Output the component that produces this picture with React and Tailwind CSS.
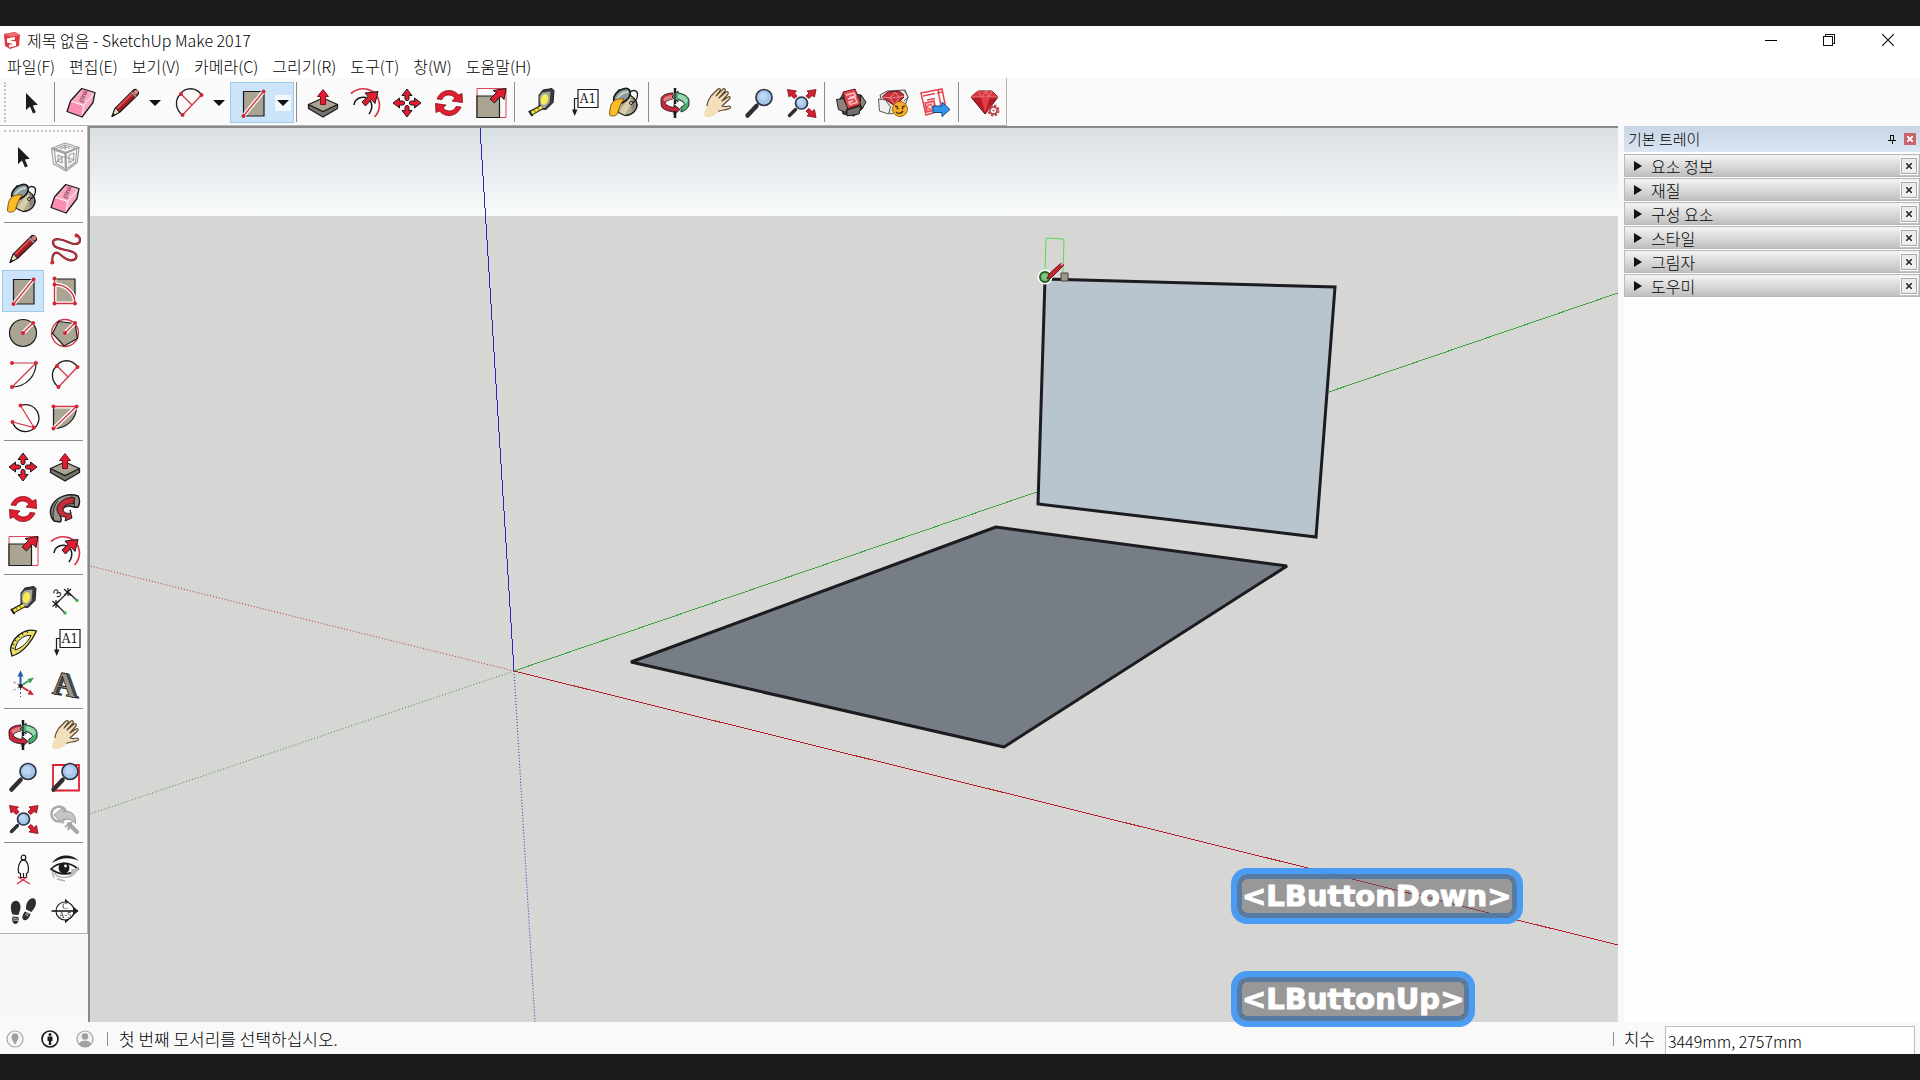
import clsx from 'clsx';

const RED = '#e21d2f';
const INK = '#1c1c1e';
const TAUPE = '#a9a592';

function Svg({ children }) {
  return (
    <svg viewBox="0 0 32 32" className="size-8 shrink-0 overflow-visible" fill="none" aria-hidden="true">
      {children}
    </svg>
  );
}

function Dots({ at }) {
  return at.map(([x, y]) => <circle key={`${x}-${y}`} cx={x} cy={y} r="2" fill="#d42436" />);
}

// red line on a white halo, used by all the shape tools
function Halo({ d }) {
  return (
    <>
      <path d={d} stroke="#fff" strokeWidth="4" />
      <path d={d} stroke="#d03545" strokeWidth="1.4" />
    </>
  );
}

const Cursor = () => (
  <Svg>
    <path d="M11 6v17l4-3.6 3 7 2.8-1.2-3-6.8 5-.6z" fill={INK} />
  </Svg>
);

const Component = () => (
  <Svg>
    <g stroke="#a2a2a2" strokeWidth="1.2" strokeLinejoin="round">
      <path d="M2.5 7.5 16 2l14 4.5-1.7 15L17 30 4.5 23z" />
      <path d="M5 8.5 16 4l11 3.5M5.5 10l1.3 12L15.5 27.5M18.5 27 26.5 21l1.3-12" />
      <path d="m2.5 7.5 14 4.5L30 6.5M16.5 12 17 30" strokeWidth="2.4" />
      <path d="m16 4 .2 5M7 21.5l7-6 12 3.5M9 14l4 2v6l-4-2zM20 14l5-2-.6 7-4.4 3zM11 8l5-2 5 1.5" />
    </g>
  </Svg>
);

const Bucket = () => (
  <Svg>
    <g transform="translate(-2 0)">
      <path d="M12 3 23 8c6 4 8 9 6.5 13-2 5-7 7.5-11 7.5C13 27 8 23 6 17z" fill="#b3aa91" stroke={INK} strokeWidth="1.5" />
      <path d="M22 11 12 25l6 3 7-13z" fill="#d9cda8" />
      <path d="M25 10c3 3 4.5 7 3 11l-3 4c-1-5-1-10 0-15z" fill="#8a8576" />
      <ellipse cx="15" cy="9" rx="9.5" ry="6" transform="rotate(-38 15 9)" fill="#8b9a9c" stroke={INK} strokeWidth="1.8" />
      <path d="M10 12c3-5 7-7 11-7" stroke="#c6d2d2" strokeWidth="2" />
      <path d="M23 5c4-3 8-1 7.5 3-.3 4-3 7-5.5 8" stroke={INK} strokeWidth="1.3" />
      <circle cx="24" cy="16" r="1.5" fill="#eee" stroke={INK} />
      <path d="M17 12c-6-1-11 1-13 6-1 3-1.5 8-1.5 10 2 2 6 1 8-1 1-6 3-10 6.5-15z" fill="#fbbc26" stroke="#7d5b12" />
    </g>
  </Svg>
);

const Eraser = () => (
  <Svg>
    <path d="M16.7 1.5 30 5.5l-2 10L17 30 2 24.5 5.5 14z" fill="#f9a9c0" />
    <path d="M5.5 14 18.5 18.5 17 30 2 24.5z" fill="#fb8fb2" />
    <path d="M5.5 14 18.5 18.5 30 5.5M18.5 18.5 17 30" stroke="#fff" />
    <path d="M16.7 1.5 30 5.5l-2 10L17 30 2 24.5 5.5 14z" stroke={INK} strokeWidth="1.3" strokeLinejoin="round" />
    <text x="19" y="12" transform="rotate(-62 18 10)" textAnchor="middle" fontSize="7" fontFamily="Liberation Sans" fill="#6d2437">pink</text>
  </Svg>
);

const Pencil = () => (
  <Svg>
    <path d="M3 29.5 6 21.5 24.5 3c2-2 6.5 2 4.5 4.5L11 25z" fill="#a51f22" stroke={INK} strokeWidth="1.2" strokeLinejoin="round" />
    <path d="M8 21.5 24 5.5" stroke="#e0474a" strokeWidth="2.2" />
    <path d="M3 29.5 6 21.5l2 .3.8 2 2.2 1.2z" fill="#e9dcb6" stroke={INK} strokeLinejoin="round" />
    <path d="m3 29.5 1.2-3.2 2 1.6z" fill={INK} />
    <path d="m22.5 5 4.5 4.5" stroke="#8f8f8f" strokeWidth="2" />
    <circle cx="27" cy="5" r="2" fill="#e0898b" />
  </Svg>
);

const FREEHAND_PATH =
  'M3.5 29C2.5 22 6 17 10.5 21c5 4 10 8.5 15 5.5 4-3 1.5-7-4.5-8.5C13 16 4 15.5 4 9.5 4.5 4 14 6.5 19 9c7 3.5 12 2 12-2 0-3-3-4.5-3-4.5';

const Freehand = () => (
  <Svg>
    <path d={FREEHAND_PATH} stroke="#5a1218" strokeWidth="2.2" />
    <path d={FREEHAND_PATH} stroke="#d03545" strokeWidth="1.2" />
    <Dots at={[[3.3, 29.5], [27.5, 2.5]]} />
  </Svg>
);

const Rectangle = () => (
  <Svg>
    <path d="M6.5 4.5h20.5v24.5H6.5z" fill={TAUPE} stroke={INK} strokeWidth="1.2" />
    <Halo d="M6.5 29 26.5 4.5" />
    <Dots at={[[6.5, 29], [26.5, 4.5]]} />
  </Svg>
);

const RotatedRect = () => (
  <Svg>
    <path d="M5.5 4H26v24.5H5.5z" fill={TAUPE} stroke={INK} strokeWidth="1.2" />
    <Halo d="M5.5 3.5v25H26c0-11-9-19-20.5-19" />
    <Dots at={[[5.5, 3.5], [5.5, 9.5], [5.5, 28.5], [26, 28.5]]} />
  </Svg>
);

const Circle = () => (
  <Svg>
    <circle cx="16" cy="16" r="13.5" fill={TAUPE} stroke={INK} strokeWidth="1.2" />
    <Halo d="M16 16 26 6" />
    <Dots at={[[16, 16], [26, 6]]} />
  </Svg>
);

const Polygon = () => (
  <Svg>
    <circle cx="16" cy="16" r="13.5" stroke="#d03545" strokeWidth="1.3" />
    <path d="m9.5 4.5 16.5 2 2.5 15L15 29 3.5 16.5z" fill={TAUPE} stroke={INK} strokeWidth="1.2" />
    <Halo d="M16 16 26 6" />
    <Dots at={[[16, 16], [26, 6]]} />
  </Svg>
);

const Arc = () => (
  <Svg>
    <path d="M29 4c0 13-10 24-24 24" stroke={INK} strokeWidth="1.2" />
    <path d="M5 4h24L5 28" stroke="#d03545" strokeWidth="1.2" />
    <Dots at={[[5, 4], [29, 4], [5, 28]]} />
  </Svg>
);

const Arc2 = () => (
  <Svg>
    <path d="M28.5 8C23-.5 12 0 7 7.5 1 14 3 23 9.5 28" stroke={INK} strokeWidth="1.3" />
    <path d="M28.5 8 9.5 28M8 7l11 11" stroke="#d03545" strokeWidth="1.3" />
    <Dots at={[[8, 7], [28.5, 8], [9.5, 28]]} />
  </Svg>
);

const Arc3 = () => (
  <Svg>
    <path d="M13.5 4.5A13.5 13.5 0 1 1 5.5 21" stroke={INK} strokeWidth="1.3" />
    <path d="M13.5 4.5 27 26.5 5.5 21" stroke="#d03545" strokeWidth="1.2" />
    <Dots at={[[13.5, 4.5], [5.5, 21], [27, 26.5]]} />
  </Svg>
);

const Pie = () => (
  <Svg>
    <path d="M4.5 5.5h23c0 13-10 22-23 22z" fill={TAUPE} stroke={INK} strokeWidth="1.2" />
    <Halo d="M4.5 5.5h23l-23 22" />
    <Dots at={[[4.5, 5.5], [27.5, 5.5], [4.5, 27.5]]} />
  </Svg>
);

const Move = () => (
  <Svg>
    {[0, 90, 180, 270].map((r) => (
      <path key={r} transform={`rotate(${r} 16 16)`} d="m16 2 5 6.5h-3v5h-4v-5h-3z" fill={RED} stroke={INK} strokeLinejoin="round" />
    ))}
    <path d="m12.5 12.5 7 7m0-7-7 7" stroke="#fff" strokeWidth="1.5" />
  </Svg>
);

const PushPull = () => (
  <Svg>
    <path d="m1.5 17.5 14.5 7 14.5-7v4L16 30 1.5 21.5z" fill="#77756a" stroke={INK} strokeWidth="1.3" strokeLinejoin="round" />
    <path d="M1.5 17.5 16 11l14.5 6.5L16 24.5z" fill={TAUPE} stroke={INK} strokeWidth="1.3" strokeLinejoin="round" />
    <path d="m16 2.5 5.5 7h-3v8h-5v-8h-3z" fill={RED} stroke="#7b1019" strokeLinejoin="round" />
  </Svg>
);

const Rotate = () => (
  <Svg>
    {[0, 180].map((r) => (
      <path key={r} transform={`rotate(${r} 16 16)`} d="M4 12C8 2 20 1 25.5 8L29 6.5 29.5 15.5 19 14l3-3C18 6.5 11 7 9 12.5z" fill={RED} stroke="#7b1019" strokeWidth=".8" strokeLinejoin="round" />
    ))}
  </Svg>
);

const FollowMe = () => (
  <Svg>
    <path d="M29 3c-9-3-20 0-25 8-4 6-3 13 1 17l6 1c2-1 1-5 0-7 0-5 4-9 9-9 4 0 6 2 9 1 2-3 2-8 0-11z" fill="#94928a" stroke={INK} strokeWidth="1.5" />
    <path d="M9 8c-5 5-6 13-4 20M22 2.5c3 3 4 7 3 12" stroke={INK} />
    <path d="M12 9c4-4 9-5 14-4l-2 6c-5-1-10 2-10 6 1 3 4 4 8 3l-1-3 2 8-7 3 1-4c-4 0-8-2-9-7 0-4 1-6 4-8z" fill="#c92a34" stroke={INK} />
  </Svg>
);

const Scale = () => (
  <Svg>
    <path d="M2 1.5h29v29H2z" stroke="#d9455a" />
    <path d="M2 9h22.5v21.5H2z" fill={TAUPE} stroke={INK} strokeWidth="1.2" />
    <path d="m31 1.5-2 11-3.5-3.5-6 7L15 12l6.5-6.5L18 3.5z" fill={RED} stroke={INK} strokeLinejoin="round" />
  </Svg>
);

const Offset = () => (
  <Svg>
    <path d="M2 6.5C12-2 29 1 30.5 17c0 5-1 9-5 13" stroke="#d9344a" strokeWidth="1.7" />
    <path d="M5 18c1-8 12-11 17-3 1.5 4 1 8-2 12" stroke={INK} strokeWidth="1.5" />
    <path d="m29 4.5-3 12-3.5-4-6 6.5-3.5-4 6-5.5-3-3.5z" fill={RED} stroke={INK} strokeLinejoin="round" />
  </Svg>
);

const Tape = () => (
  <Svg>
    <path d="m14 8 4-5 9-1.5 2 2-1 12-7 7-7-1z" fill="#3b3b3b" stroke={INK} strokeLinejoin="round" />
    <path d="m14.5 9 3-3.5 8-1-1 11L20 21h-5z" fill="#a3a5a4" />
    <ellipse cx="19.5" cy="12.5" rx="3.5" ry="5.5" transform="rotate(15 19.5 12.5)" fill="#f9ec4f" />
    <path d="m17 20-12 6.5" stroke={INK} strokeWidth="5" />
    <path d="m17 20-11.5 6.5" stroke="#f5e63f" strokeWidth="3" />
    <path d="m4 24 3.5 5" stroke={INK} strokeWidth="2" />
    <path d="m9 23 1.5 2m2-4 1.5 2" stroke="#75701f" />
  </Svg>
);

const Dimension = () => (
  <Svg>
    <path d="m7 19 12-12M7 19l9 9M19 7l9 8.5" stroke={INK} strokeWidth="1.1" />
    <path d="M3.5 16 10 22M3.5 21.5 10 16M7 15v8M15 4l7 6.5M15.5 10 22 4M19 3v8" stroke={INK} strokeWidth="1.2" />
    <text x="9" y="12" textAnchor="middle" transform="rotate(-45 9 9)" fontSize="12" fontFamily="Liberation Sans" fill={INK}>3</text>
    <circle cx="16" cy="28" r="1.7" fill="#3fae55" />
    <circle cx="28" cy="15.5" r="1.7" fill="#3fae55" />
  </Svg>
);

const Protractor = () => (
  <Svg>
    <path d="M29.5 4C17 0 4 12 3.5 23l1.5 6 4-1.5C17 24 25 14 29.5 4z" fill="#ecdc62" stroke={INK} strokeWidth="1.3" strokeLinejoin="round" />
    <path d="M24 8.5C16 7.5 9 14 8 23c7-2 13-8 16-14.5z" fill="#fafafa" stroke={INK} />
    <path d="m20 4 .5 2M15 6l1 2M11 9l1.5 1.5M8 13l1.5 1M5.5 17l2 .8M5 21l2 .3" stroke={INK} />
  </Svg>
);

const Label = () => (
  <Svg>
    <path d="M11 11.5H7.5V23" stroke={INK} strokeWidth="1.2" />
    <path d="M11 2.5h20v18H11z" fill="#fff" stroke={INK} strokeWidth="1.2" />
    <path d="M5 22.5h5.5L7.7 29z" fill={INK} />
    <text x="21" y="15.5" textAnchor="middle" fontSize="12" fontFamily="DejaVu Serif" fill={INK}>A1</text>
  </Svg>
);

const Axes = () => (
  <Svg>
    <path d="M13.5 17V6" stroke="#2459a8" strokeWidth="2" />
    <path d="m13.5 1.5 3 6h-6z" fill="#2459a8" />
    <path d="m13.5 17 8-5" stroke="#3a9b57" strokeWidth="2" />
    <path d="m27 8.5-4 6-2.5-4.5z" fill="#3a9b57" />
    <path d="m13.5 17 8 5" stroke="#c52635" strokeWidth="2" />
    <path d="m27 26-6.5-.5 2.5-5z" fill="#c52635" />
    <path d="M13.5 19v9" stroke="#2459a8" strokeDasharray="2 2" />
    <path d="m12 16-7-4" stroke="#c52635" strokeDasharray="2 2" />
    <path d="m12 18-7 4.5" stroke="#3a9b57" strokeDasharray="2 2" />
    <circle cx="13.5" cy="17" r="2" fill={INK} />
  </Svg>
);

const Text3D = () => (
  <Svg>
    <g fontFamily="Liberation Serif" fontWeight="700" fontSize="34" textAnchor="middle" transform="skewY(10)" strokeWidth=".8">
      <text x="17.5" y="24" fill="#55544f" stroke={INK}>A</text>
      <text x="16.5" y="24" fill="#55544f">A</text>
      <text x="15" y="24" fill="#96958c" stroke={INK}>A</text>
    </g>
  </Svg>
);

const Orbit = () => (
  <Svg>
    <path d="M14 6c-7 0-12 3-12 6.5 0 3 0 6 1 8 3 3 8 4 12 4.5v3l6-5.5-6-5v3c-5-.5-8-2.5-9-4.5 1-2 4-3.5 8-4z" fill="#c9253b" stroke={INK} strokeWidth=".9" strokeLinejoin="round" />
    <path d="M4 12c2-3 6-4 10-4v4c-3 0-6 1-8 3z" fill="#e2807a" />
    <path d="M19 6c7 1 11 4 11 8v4c-1 4-5 6-8 7v-5c3-1 4-3 3-4-2-2-4-3-6-3.5V15l-6-5 6-6z" fill="#49ae72" stroke={INK} strokeWidth=".9" strokeLinejoin="round" />
    <path d="M19 7c5 .5 9 3 10 7l-3 3c0-3-4-5-7-5.5z" fill="#9bd8b2" />
    <path d="M16 1v5M16 13v4M16 24v7" stroke={INK} strokeWidth="2.5" />
    <path d="M16 6v7" stroke="#4a4a4a" strokeWidth="2" />
  </Svg>
);

const Hand = () => (
  <Svg>
    <path d="M3 28c0-3 2-6 3-9 0-4 2-7 4-10l7-7c1.5-1 3 0 2 1.5L15 9l7-7c1.5-1 3 .3 2 2l-6 7 7-6c1.5-1 3 .3 2 2l-6 7 6-4c2-1 3 .5 1.5 2L20 20c3 1 5 0 7-.5 2 0 2 2 .5 2.5-4 2-9 2-11 4-2 1.5-4 3-7 4-3 .5-5 .5-6.5-2z" fill="#f3dfbb" />
    <path d="M6 19c0-4 2-7 4-10l7-7c1.5-1 3 0 2 1.5L15 9l7-7c1.5-1 3 .3 2 2l-6 7 7-6c1.5-1 3 .3 2 2l-6 7 6-4c2-1 3 .5 1.5 2L21 19c3 1.5 5 .5 7 0 2 0 2 2 .5 2.5-4 2-9 1-11 3" stroke="#5d4b33" strokeWidth="1.2" strokeLinejoin="round" />
  </Svg>
);

function Lens({ cx, cy, r }) {
  return (
    <>
      <circle cx={cx} cy={cy} r={r} fill="#a6c5ea" stroke="#2c3445" strokeWidth="1.7" />
      <circle cx={cx - 1} cy={cy - 1} r={r / 2} fill="#bcd5f2" />
    </>
  );
}

const Zoom = () => (
  <Svg>
    <path d="m4.5 28.5 9-9.5" stroke="#303033" strokeWidth="4.5" strokeLinecap="round" />
    <path d="m12 20 3-3" stroke="#303033" strokeWidth="2" />
    <Lens cx={21} cy={10.5} r={8} />
  </Svg>
);

const ZoomWindow = () => (
  <Svg>
    <path d="M4 4h26v25.5H4z" stroke={RED} strokeWidth="1.8" />
    <path d="m4.5 28.5 9-9.5" stroke="#303033" strokeWidth="4.5" strokeLinecap="round" />
    <path d="m12 20 3-3" stroke="#303033" strokeWidth="2" />
    <Lens cx={21} cy={10.5} r={8} />
  </Svg>
);

const ZoomExtents = () => (
  <Svg>
    <path d="m4.5 28.5 6-6" stroke="#303033" strokeWidth="3.5" strokeLinecap="round" />
    <g fill="#d4202f" stroke="#7b1019" strokeWidth=".8" strokeLinejoin="round">
      <path d="m2.5 2.5 9 1.5-2 2 2.5 3-3 2.5-3-3-2 1.5z" />
      <path d="M31 2.5 22 4l2 2-3 3 3 2.5 3-3 2.5 1.5z" />
      <path d="M31 30.5 22 29l2-2-3-3 3-2.5 3 3 2.5-2z" />
    </g>
    <Lens cx={16.5} cy={16} r={6} />
  </Svg>
);

const Previous = () => (
  <Svg>
    <circle cx="10" cy="11" r="7.5" stroke="#a9a9a9" strokeWidth="2.5" />
    <path d="M5 12 14 4.5v4c8-1 13 2 12.5 12-4-4-6-5-12.5-4v4z" fill="#c6c6c6" stroke="#9a9a9a" />
    <path d="m20 21 8 8" stroke="#a5a5a5" strokeWidth="4" strokeLinecap="round" />
    <path d="m16 24 6-4-3 7" stroke="#a5a5a5" strokeWidth="2" />
  </Svg>
);

const Position = () => (
  <Svg>
    <g stroke={INK} strokeWidth="1.2">
      <circle cx="16.5" cy="4.5" r="2.3" />
      <path d="M14.5 7.5c-3 3-3.5 8-3 12l2 1v4h6v-4l1.5-1c1-4 0-9-2.5-12zM16.5 20v5" />
    </g>
    <path d="m10 31 10-7M11 24l12 7" stroke="#dc3140" strokeWidth="1.4" />
  </Svg>
);

const Eye = () => (
  <Svg>
    <path d="M3 10C9 1 22 0 30 8c-8-4-18-4-27 2z" fill={INK} />
    <path d="M2 16c7-7 18-8 27 0-7 6-18 7-27 0z" fill="#fff" stroke={INK} strokeWidth="1.7" />
    <circle cx="15" cy="15" r="5.5" fill={INK} />
    <circle cx="16.5" cy="13" r="1.4" fill="#fff" />
    <path d="M22 16c4 0 7-1 8-3-1 6-5 11-12 12 4-3 5-6 4-9z" fill="#bcbcbc" />
    <path d="M5 20c4 5 12 6 18 2M8 26l8 2M3 18l2 7" stroke="#b5b5b5" strokeWidth="1.5" />
  </Svg>
);

const Walk = () => (
  <Svg>
    <g fill="#2d2d2d">
      <path d="M5 8c3-4 8-2 8.5 3 .3 4-1.5 6-2 9l-6-.5C4 16 3 11 5 8zM5.5 21.5l6 .5c.5 4-.5 7-3 7s-4-3-3-7.5z" />
      <path d="M20 8c2-5 7-6 8.5-3 1.5 5-1 8-4 12l-5.5-2.5C19 12 19 10 20 8zM18 16.5l5.5 2.5c-1 4-4 7-6.5 6s-2-5 1-8.5z" />
    </g>
    <path d="m6 23 5 1m-5 1 5 .5M19 18l3 1.5m-4 0 3 1.5" stroke="#ddd" strokeWidth=".8" />
  </Svg>
);

const Section = () => (
  <Svg>
    <path d="m16 3.5 13 12.5-13 12.5z" fill={INK} />
    <circle cx="16" cy="16" r="9" fill="#fff" stroke={INK} strokeWidth="1.2" />
    <path d="M2.5 16H29" stroke={INK} strokeWidth="1.6" />
    <path d="m24 12 5.5 4-5.5 4z" fill={INK} />
    <g fontFamily="Liberation Serif" fontSize="8" textAnchor="middle" fill={INK}>
      <text x="16" y="14">C</text>
      <text x="16" y="23">A-5</text>
    </g>
  </Svg>
);

const Warehouse = () => (
  <Svg>
    <path d="M5 12 9 5l17 3 2 13-9 8-11-2z" fill="#4a443f" stroke={INK} />
    <path d="m8 5 12-3 6 15-14 5z" fill="#e04a50" stroke="#6d1116" />
    <path d="m11 8 8-2 1.500 3-6 1.500M13 12l7-1.500 2 5-7 2-1-2.500 4-1" stroke="#f8c9cb" strokeWidth="1.300" />
    <path d="m1.500 12.500 7-1 4 9-2 5-7-3zM26 8l5 7-4 7-2-6z" fill="#8d8378" stroke={INK} strokeLinejoin="round" />
    <path d="m12 23 14-4-2 8-12 2z" fill="#77706a" stroke={INK} strokeLinejoin="round" />
  </Svg>
);

const ExtWarehouse = () => (
  <Svg>
    <path d="m3 8 7-4 18-1 3 7-4 12-13 5-7-4z" fill="#e6e3df" stroke="#55504b" />
    <path d="m5 10 6-5 11-1 6 5-10 10z" fill="#c8323b" stroke="#5c0e15" strokeLinejoin="round" />
    <path d="m5 10 9 1 14-2M13 11l5 7 4-8-4-5-5 6" stroke="#f1868c" />
    <path d="m1.500 12 7 1 5 7-2 7-9-3zM27 3l4 7-4 4" fill="#f1efec" stroke="#5d5853" strokeLinejoin="round" />
    <circle cx="23" cy="22" r="7.500" fill="#f6ae2a" stroke="#a36b0c" />
    <path d="m18 19 3 1m4 0 3-1M19 25c2 2 5 2 7-1" stroke="#4b3108" strokeWidth="1.400" />
    <circle cx="20.500" cy="21.500" r="1" fill="#4b3108" />
    <circle cx="25.500" cy="21.500" r="1" fill="#4b3108" />
  </Svg>
);

const LayoutIcon = () => (
  <Svg>
    <path d="m2 6 21-4 4 20-20 6z" fill="#fff" stroke="#e4444f" strokeWidth="1.5" />
    <path d="m4 9 12-2.500M18 6l5-1M19 2.500l3 17M8 13l8-1.500" stroke="#e4444f" strokeWidth="1.500" />
    <path d="m6 16 9-2 2 9-9 2z" fill="#f7b9bd" stroke="#e4444f" strokeWidth="1.500" />
    <circle cx="11" cy="20" r="2.500" stroke="#e4444f" />
    <path d="M14 19h9v-4l8 7.500-8 7v-4h-9z" fill="#2f95ee" stroke="#12497f" strokeLinejoin="round" />
  </Svg>
);

const ExtManager = () => (
  <Svg>
    <path d="m2 10 7-6h14l6 6-13 17z" fill="#b51c27" stroke="#560c12" strokeLinejoin="round" />
    <path d="M2 10h27L23 4H9z" fill="#d93a42" />
    <path d="m9 4 4 6 4-6 3 6 3-6M2 10h27" stroke="#f08a8f" strokeWidth=".8" />
    <path d="m12 10 4 16 5-16z" fill="#e33f49" />
    <circle cx="24.500" cy="23.500" r="5" stroke="#c2414a" strokeWidth="2" strokeDasharray="2.500 1.400" />
    <circle cx="24.500" cy="23.500" r="3.500" fill="#fafafa" stroke="#b23741" strokeWidth="1.500" />
    <circle cx="24.500" cy="23.500" r="1" fill="#b23741" />
  </Svg>
);

const topTools = [
  [['선택', Cursor]],
  [['지우개', Eraser], ['선', Pencil, 'menu'], ['호', Arc2, 'menu'], ['사각형', Rectangle, 'menu', true]],
  [['밀기/끌기', PushPull], ['오프셋', Offset], ['이동', Move], ['회전', Rotate], ['배율', Scale]],
  [['줄자', Tape], ['텍스트', Label], ['페인트 통', Bucket]],
  [['궤도', Orbit], ['이동 보기', Hand], ['확대/축소', Zoom], ['범위 확대', ZoomExtents]],
  [['3D Warehouse', Warehouse], ['Extension Warehouse', ExtWarehouse], ['LayOut', LayoutIcon]],
  [['확장 프로그램 관리자', ExtManager]],
];

const sideTools = [
  [['선택', Cursor], ['구성 요소 만들기', Component], ['페인트 통', Bucket], ['지우개', Eraser]],
  [
    ['선', Pencil], ['자유형', Freehand],
    ['사각형', Rectangle, true], ['회전된 사각형', RotatedRect],
    ['원', Circle], ['다각형', Polygon],
    ['호', Arc], ['2점 호', Arc2],
    ['3점 호', Arc3], ['원형 호', Pie],
  ],
  [['이동', Move], ['밀기/끌기', PushPull], ['회전', Rotate], ['따라가기', FollowMe], ['배율', Scale], ['오프셋', Offset]],
  [['줄자', Tape], ['치수', Dimension], ['각도기', Protractor], ['텍스트', Label], ['축', Axes], ['3D 텍스트', Text3D]],
  [['궤도', Orbit], ['이동 보기', Hand], ['확대/축소', Zoom], ['창 확대', ZoomWindow], ['범위 확대', ZoomExtents], ['이전', Previous]],
  [['카메라 배치', Position], ['둘러보기', Eye], ['걷기', Walk], ['단면', Section]],
];

const menus = ['파일(F)', '편집(E)', '보기(V)', '카메라(C)', '그리기(R)', '도구(T)', '창(W)', '도움말(H)'];
const panels = ['요소 정보', '재질', '구성 요소', '스타일', '그림자', '도우미'];

function TitleBar() {
  return (
    <header className="flex h-7 shrink-0 items-center bg-white pl-[3px]">
      <svg viewBox="0 0 18 18" className="size-[18px]" aria-hidden="true">
        <path d="M1 3 12 1l5 3-1 11-9 3-5-3z" fill="#dc3b40" />
        <path d="M1 3 12 1l5 3-9 2z" fill="#ef6d6f" />
        <path d="M4 7.5 12 6v2.5L7 9.5l6 1v4.5l-7 1.5v-2.5l4-1-6-1.5z" fill="#fff" />
      </svg>
      <h1 className="ml-1.5 text-[16px] leading-7 font-light">제목 없음 - SketchUp Make 2017</h1>
      <div className="ml-auto flex items-center">
        <button type="button" aria-label="최소화" className="flex h-7 w-[59px] items-center justify-center">
          <span className="h-px w-3 bg-black" />
        </button>
        <button type="button" aria-label="이전 크기로" className="flex h-7 w-[58px] items-center justify-center">
          <svg viewBox="0 0 12 12" className="size-3" fill="none" stroke="#111" shapeRendering="crispEdges">
            <path d="M.5 2.5h9v9h-9zM2.5 2.5v-2h9v9h-2" />
          </svg>
        </button>
        <button type="button" aria-label="닫기" className="flex h-7 w-[60px] items-center justify-center">
          <svg viewBox="0 0 12 12" className="size-3" stroke="#111" strokeWidth="1.2">
            <path d="m0 0 12 12M12 0 0 12" />
          </svg>
        </button>
        <span className="w-0.5" />
      </div>
    </header>
  );
}

function TopToolbar() {
  return (
    <div className="h-12 shrink-0 bg-[#fafafa]">
      <div className="flex h-full w-fit items-start border-r border-b border-[#b4b4b4] pt-1">
        <span className="mr-1 ml-1 h-10 w-0.5 border-l-2 border-dotted border-[#c4c4c4]" />
        {topTools.map((group, i) => (
          <div key={i} className="flex">
            {i > 0 && <span className="mr-[5px] ml-0.5 h-10 w-px bg-[#8c8c8c]" />}
            {group.map(([name, Icon, menu, active]) =>
              menu ? (
                <div
                  key={name}
                  className={clsx('flex h-[41px] w-16 items-center border', active ? 'border-[#9fc9ea] bg-[#cce4fa]' : 'border-transparent')}
                >
                  <button type="button" aria-label={name} className="flex w-11 justify-center"><Icon /></button>
                  <button
                    type="button"
                    aria-label={`${name} 메뉴`}
                    className={clsx('flex h-4 w-4 items-center justify-center', active && 'bg-[#f3f8fd]')}
                  >
                    <span className="border-x-[6px] border-t-[6px] border-x-transparent border-t-[#111]" />
                  </button>
                </div>
              ) : (
                <button key={name} type="button" aria-label={name} className="flex h-[41px] w-[42px] items-center justify-center">
                  <Icon />
                </button>
              )
            )}
          </div>
        ))}
      </div>
    </div>
  );
}

function SideToolbar() {
  return (
    <aside className="w-[88px] shrink-0 bg-[#f8f8f8]">
      <div className="border-r border-b border-[#b4b4b4] bg-[#fbfbfb] pt-1 pb-px">
        <div className="mx-1 mb-1 h-0.5 border-t-2 border-dotted border-[#c4c4c4]" />
        {sideTools.map((group, i) => (
          <div key={i}>
            {i > 0 && <div className="mx-1 mt-0.5 mb-[5px] h-px bg-[#8c8c8c]" />}
            <div className="grid grid-cols-[42px_42px] pl-0.5">
              {group.map(([name, Icon, active]) => (
                <button
                  key={name}
                  type="button"
                  aria-label={name}
                  className={clsx('flex h-[42px] items-center justify-center border', active ? 'border-[#9fc9ea] bg-[#cce4fa]' : 'border-transparent')}
                >
                  <Icon />
                </button>
              ))}
            </div>
          </div>
        ))}
      </div>
    </aside>
  );
}

function KeyBadge({ children }) {
  return (
    <div className="w-fit rounded-2xl border-[6px] border-[#4198f5]/95">
      <div className="rounded-[10px] border-[5px] border-[#4f77a2]/95">
        <div className="bg-[#5a5a5c]/50 font-['DejaVu_Sans',sans-serif] text-[29px] leading-[34px] font-bold text-white [-webkit-text-stroke:1px_white]">
          {children}
        </div>
      </div>
    </div>
  );
}

function Viewport() {
  return (
    <main className="relative min-w-0 flex-1 border-t-2 border-l-2 border-[#8a8a8a] bg-[#d6d6d4]">
      <svg viewBox="90 128 1528 894" preserveAspectRatio="xMinYMin slice" className="absolute inset-0 size-full" fill="none">
        <defs>
          <linearGradient id="sky" x1="0" y1="0" x2="0" y2="1">
            <stop offset="0" stopColor="#d9dfe2" />
            <stop offset=".6" stopColor="#edf0f2" />
            <stop offset="1" stopColor="#f8fafb" />
          </linearGradient>
        </defs>
        <path d="M90 128h1528v88H90z" fill="url(#sky)" />
        <g shapeRendering="crispEdges">
          <path d="M480 128 514 671" stroke="#2a2ab8" />
          <path d="m514 671 1104-378" stroke="#3fa63f" />
          <path d="m514 671 1104 274" stroke="#b8202c" />
        </g>
        <path d="m514 671 21 351" stroke="#2a2ac0" strokeDasharray="1 2" />
        <path d="M514 671 90 814" stroke="#3f8f3f" strokeDasharray="1 2" />
        <path d="M514 671 90 566" stroke="#c03040" strokeDasharray="1 2" />
        <path d="m1045 279 290 8-19 250-278-33z" fill="#b8c5cf" stroke="#1b1b20" strokeWidth="3" />
        <path d="m631 662 365-135 291 39-283 181z" fill="#767d84" stroke="#1b1b20" strokeWidth="3" strokeLinejoin="bevel" />
        <path d="m1045 272 1-34 18 1-1 33" stroke="#56dc56" />
        <path d="M1061 273h7v8h-7z" fill="#9a978a" stroke="#4b4a43" />
        <circle cx="1045" cy="277" r="6.5" fill="#8fd08f" stroke="#fff" strokeWidth="2" />
        <circle cx="1045" cy="277" r="5" fill="#7fc57b" stroke="#245f2a" strokeWidth="2" />
        <path d="m1047 279 2-5 12-11 3 2-12 12z" fill="#c3262e" stroke="#6b151a" />
        <circle cx="1062" cy="264" r="1.5" fill="#d9a5a5" />
      </svg>
      <div className="absolute bottom-[-5px] left-[1141px] flex flex-col gap-[47px]">
        <KeyBadge>&lt;LButtonDown&gt;</KeyBadge>
        <KeyBadge>&lt;LButtonUp&gt;</KeyBadge>
      </div>
    </main>
  );
}

function Tray() {
  return (
    <aside className="ml-1.5 flex w-[296px] shrink-0 flex-col bg-[#fdfefe]">
      <div className="mb-0.5 flex h-[26px] items-center bg-linear-to-b from-[#c8d5e4] to-[#dbe5f3] pr-1 pl-1">
        <h2 className="text-[15px] leading-6 font-light">기본 트레이</h2>
        <button type="button" aria-label="자동 숨기기" className="ml-auto p-1">
          <svg viewBox="0 0 8 10" className="h-2.5 w-2" fill="none" stroke="#111" shapeRendering="crispEdges">
            <path d="M2.5 6V1.5h3V6M5 1v5M0 6.5h8M4 7v3" />
          </svg>
        </button>
        <button type="button" aria-label="트레이 닫기" className="ml-1 flex size-3 items-center justify-center bg-[#c9666b]">
          <svg viewBox="0 0 6 6" className="size-1.5" stroke="#fff" strokeWidth="1.8"><path d="m0 0 6 6M6 0 0 6" /></svg>
        </button>
      </div>
      {panels.map((name) => (
        <section key={name} className="mb-px flex h-[23px] items-center border border-[#b8b8b8] bg-linear-to-b from-[#f4f4f4] to-[#c0c0c0] pr-0.5">
          <button type="button" className="flex flex-1 items-center gap-[9px] pl-[9px] text-left text-[16px] leading-5 font-light">
            <span className="border-y-[5px] border-l-[8px] border-y-transparent border-l-[#111]" />
            {name}
          </button>
          <button type="button" aria-label={`${name} 닫기`} className="flex size-4 items-center justify-center border border-[#a9a9a9] bg-[#eee] outline outline-white">
            <svg viewBox="0 0 6 6" className="size-1.5" stroke="#222" strokeWidth="1.5"><path d="m0 0 6 6M6 0 0 6" /></svg>
          </button>
        </section>
      ))}
    </aside>
  );
}

function StatusBar() {
  return (
    <footer className="flex h-8 shrink-0 items-center overflow-hidden bg-[#f9f9fa] pt-0.5 pr-[5px] pl-1.5 text-[17px] font-light">
      <div className="flex items-center gap-[17px]">
        <button type="button" aria-label="위치 정보">
          <svg viewBox="0 0 18 18" className="size-[18px]">
            <circle cx="9" cy="9" r="8" fill="#f6f6f6" stroke="#a8a8a8" strokeWidth="1.2" />
            <path d="M9 15C7 11 5.5 9 5.5 7a3.5 3.5 0 0 1 7 0C12.5 9 11 11 9 15z" fill="#a0a0a0" />
          </svg>
        </button>
        <button type="button" aria-label="저작자 정보">
          <svg viewBox="0 0 18 18" className="size-[18px]">
            <circle cx="9" cy="9" r="8" fill="#fff" stroke="#1c1c1e" strokeWidth="1.7" />
            <circle cx="9" cy="4.5" r="1.5" fill="#1c1c1e" />
            <path d="M6.5 6.5h5v4.5h-1.3v4H7.8v-4H6.5z" fill="#1c1c1e" />
          </svg>
        </button>
        <button type="button" aria-label="로그인">
          <svg viewBox="0 0 18 18" className="size-[18px]">
            <circle cx="9" cy="9" r="8" fill="#f3f3f3" stroke="#a0a0a0" strokeWidth="1.2" />
            <circle cx="9" cy="6.5" r="3.3" fill="#a0a0a0" />
            <path d="M3 14.5c0-5 12-5 12 0-3 3.5-9 3.5-12 0z" fill="#a0a0a0" />
          </svg>
        </button>
      </div>
      <span className="ml-[13px] h-3.5 w-px bg-[#8f8f8f]" />
      <p className="ml-[11px] leading-7">첫 번째 모서리를 선택하십시오.</p>
      <span className="ml-auto h-3.5 w-px bg-[#8f8f8f]" />
      <label htmlFor="dims" className="ml-2.5 leading-7">치수</label>
      <input
        id="dims"
        type="text"
        defaultValue="3449mm, 2757mm"
        className="mt-0.5 ml-2.5 h-[30px] w-[250px] self-start border border-[#b9bcc9] bg-white pl-0.5 text-[16px]"
      />
    </footer>
  );
}

export default function App() {
  return (
    <div className="flex h-screen flex-col bg-[#1b1b1b] py-[26px] font-['Noto_Sans_CJK_KR',sans-serif] text-black">
      <TitleBar />
      <nav className="flex h-6 shrink-0 items-center gap-3.5 bg-white pl-[7px] text-[16px] leading-6 font-light">
        {menus.map((m) => (
          <button key={m} type="button">{m}</button>
        ))}
      </nav>
      <TopToolbar />
      <div className="flex min-h-0 flex-1 bg-[#f8f8f8]">
        <SideToolbar />
        <Viewport />
        <Tray />
      </div>
      <StatusBar />
    </div>
  );
}
